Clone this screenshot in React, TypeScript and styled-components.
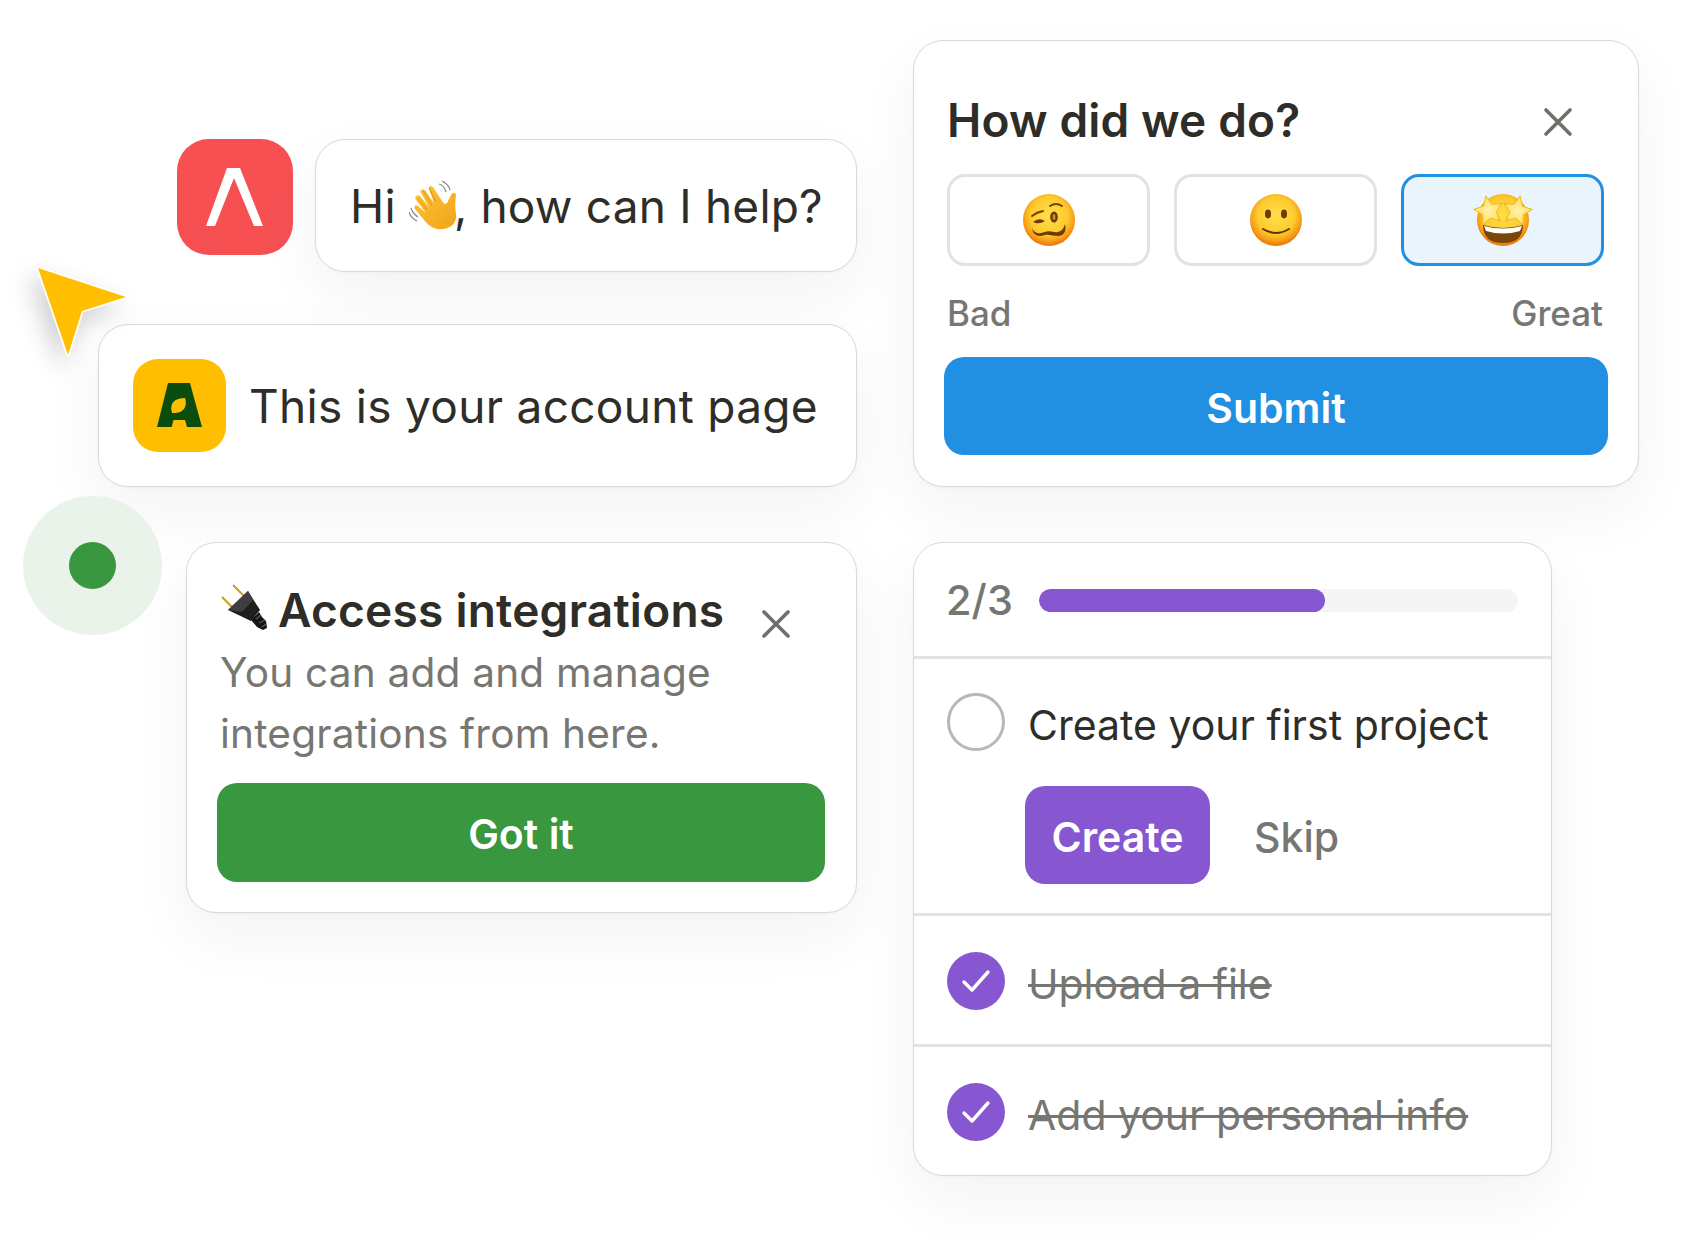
import React from "react";
import styled, { createGlobalStyle } from "styled-components";

const Global = createGlobalStyle`
  html, body { margin: 0; padding: 0; background: #fff; }
  body { font-family: Inter, "Liberation Sans", sans-serif; color: #2e2d28; }
`;

const Canvas = styled.div`
  width: 1684px;
  height: 1240px;
  overflow: hidden;
  display: grid;
  grid-template-columns: 857px 726px;
  column-gap: 56px;
  align-items: start;
  padding-top: 40px;
  box-sizing: border-box;
`;
const LeftColumn = styled.div`
  position: relative;
  display: flex;
  flex-direction: column;
  align-items: flex-end;
  padding-top: 99px;
`;
const RightColumn = styled.div`
  display: flex;
  flex-direction: column;
  align-items: flex-start;
  gap: 55px;
`;
const Card = styled.div<{ $width?: number }>`
  box-sizing: border-box;
  background: #fff;
  border: 1.5px solid #d9d9d9;
  border-radius: 30px;
  box-shadow: 0 24px 60px rgba(40, 40, 40, 0.055), 0 1px 3px rgba(40, 40, 40, 0.03);
  ${(p) => (p.$width ? `width: ${p.$width}px;` : "")}
`;
const HelloRow = styled.div`
  display: flex;
  align-items: flex-start;
  gap: 22px;
`;
const AppLogo = styled.svg`
  width: 116px;
  height: 116px;
  display: block;
  flex: none;
`;
const HelloCard = styled(Card)`
  width: 542px;
  height: 133px;
  padding-left: 34px;
  display: flex;
  align-items: center;
  white-space: pre;
  font-size: 46px;
  letter-spacing: 0.2px;
`;
const Wave = styled.svg`
  width: 56px;
  height: 52px;
  margin: 0 -11px 0 0;
  flex: none;
`;
const AccountCard = styled(Card)`
  width: 759px;
  height: 163px;
  margin-top: 52px;
  padding-left: 34px;
  display: flex;
  align-items: center;
  gap: 23px;
  font-size: 46px;
  letter-spacing: 0.3px;
  white-space: nowrap;
`;
const BrandLogo = styled.svg`
  width: 93px;
  height: 93px;
  display: block;
  flex: none;
`;
const Pointer = styled.svg`
  position: absolute;
  left: 30px;
  top: 217px;
  width: 106px;
  height: 100px;
  overflow: visible;
  filter: drop-shadow(-6px 10px 12px rgba(0, 0, 0, 0.2));
`;
const Beacon = styled.div`
  position: absolute;
  left: 23px;
  top: 456px;
  width: 139px;
  height: 139px;
  border-radius: 50%;
  background: #e9f3ea;
  display: flex;
  align-items: center;
  justify-content: center;
`;
const BeaconDot = styled.div`
  width: 47px;
  height: 47px;
  border-radius: 50%;
  background: #38973f;
`;
const TourCard = styled(Card)`
  width: 671px;
  height: 371px;
  margin-top: 55px;
  padding: 38px 31px 0 30px;
`;
const TourTitle = styled.div`
  display: flex;
  align-items: center;
  padding-left: 3px;
  height: 58px;
  font-size: 46px;
  font-weight: 600;
  letter-spacing: 0.25px;
  white-space: nowrap;
`;
const Plug = styled.svg`
  width: 48px;
  height: 48px;
  margin: 0 10px 4px 0;
  flex: none;
`;
const TourClose = styled.svg`
  width: 32px;
  height: 32px;
  margin: 28px 0 0 36px;
  flex: none;
`;
const TourText = styled.div`
  padding-left: 3px;
  margin-top: 4px;
  font-size: 40.6px;
  line-height: 60.5px;
  color: #767672;
  letter-spacing: 0.2px;
  white-space: nowrap;
`;
const ActionButton = styled.div<{ $bg: string }>`
  box-sizing: border-box;
  display: flex;
  align-items: center;
  justify-content: center;
  padding-top: 3px;
  background: ${(p) => p.$bg};
  color: #fff;
  font-size: 41px;
  font-weight: 600;
  border-radius: 20px;
`;
const GotIt = styled(ActionButton)`
  height: 99px;
  margin-top: 19px;
`;
const RatingCard = styled(Card)`
  height: 447px;
  padding: 0 30px;
`;
const RatingHead = styled.div`
  display: flex;
  align-items: center;
  justify-content: space-between;
  height: 58px;
  margin-top: 50px;
  padding: 0 34px 0 3px;
  font-size: 46px;
  font-weight: 600;
  letter-spacing: 0.15px;
`;
const Close = styled.svg`
  width: 32px;
  height: 32px;
  flex: none;
  margin-top: 4px;
`;
const Faces = styled.div`
  display: grid;
  grid-template-columns: repeat(3, 203px);
  gap: 24px;
  margin: 25px 0 0 3px;
`;
const FaceBox = styled.div<{ $on?: boolean }>`
  box-sizing: border-box;
  height: 92px;
  border-radius: 18px;
  border: 3px solid ${(p) => (p.$on ? "#2190e2" : "#e2e2e2")};
  background: ${(p) => (p.$on ? "#e9f4fc" : "#fff")};
  display: flex;
  align-items: center;
  justify-content: center;
`;
const Face = styled.svg`
  width: 60px;
  height: 60px;
`;
const Scale = styled.div`
  display: flex;
  justify-content: space-between;
  margin: 26px 5px 0 3px;
  font-size: 35px;
  line-height: 42px;
  font-weight: 500;
  color: #767672;
`;
const Submit = styled(ActionButton)`
  height: 98px;
  margin-top: 23px;
`;
const ChecklistCard = styled(Card)`
  width: 639px;
  height: 634px;
`;
const ProgressRow = styled.div`
  display: flex;
  align-items: center;
  gap: 26px;
  height: 112px;
  padding: 1px 33px 0 32px;
  border-bottom: 3px solid #e3e3e3;
  font-size: 41.5px;
  font-weight: 500;
  color: #767672;
`;
const Track = styled.div`
  flex: 1;
  height: 23px;
  border-radius: 12px;
  background: #f5f5f5;
  overflow: hidden;
`;
const Fill = styled.div`
  height: 100%;
  border-radius: 12px;
  background: #8657d0;
`;
const Task = styled.div`
  padding: 0 32px 0 33px;
  border-bottom: 3px solid #e3e3e3;
  &:last-child {
    border-bottom: 0;
  }
`;
const TaskLine = styled.div`
  display: flex;
  align-items: center;
  gap: 23px;
  height: 58px;
`;
const TaskLabel = styled.span<{ $done?: boolean }>`
  padding-top: 6px;
  font-size: 41px;
  white-space: nowrap;
  color: ${(p) => (p.$done ? "#767672" : "#2e2d28")};
  text-decoration: ${(p) => (p.$done ? "line-through" : "none")};
  text-decoration-thickness: 3px;
`;
const DoneTask = styled(Task)`
  padding-top: 36px;
  padding-bottom: 34px;
`;
const OpenTask = styled(Task)`
  padding-top: 34px;
  padding-bottom: 29px;
`;
const Radio = styled.div`
  box-sizing: border-box;
  width: 58px;
  height: 58px;
  border-radius: 50%;
  border: 3px solid #b8b8b6;
  flex: none;
`;
const Tick = styled.svg`
  width: 58px;
  height: 58px;
  flex: none;
`;
const TaskActions = styled.div`
  display: flex;
  align-items: center;
  gap: 44px;
  margin: 35px 0 0 78px;
`;
const Create = styled(ActionButton)`
  width: 185px;
  height: 98px;
`;
const Skip = styled.div`
  padding-top: 4px;
  font-size: 41px;
  font-weight: 500;
  color: #767672;
`;

const FaceDefs = ({ id }: { id: string }) => (
  <defs>
    <radialGradient id={id} cx="50%" cy="42%" r="55%">
      <stop offset="0%" stopColor="#ffdf4a" />
      <stop offset="65%" stopColor="#fdcb2e" />
      <stop offset="90%" stopColor="#f79a14" />
      <stop offset="100%" stopColor="#e9810e" />
    </radialGradient>
    <radialGradient id={`${id}s`} cx="50%" cy="50%" r="55%">
      <stop offset="0%" stopColor="#fff3ad" />
      <stop offset="70%" stopColor="#ffe46e" />
      <stop offset="100%" stopColor="#f6b81e" />
    </radialGradient>
  </defs>
);

const X = () => (
  <path d="M4 4 L28 28 M28 4 L4 28" stroke="#6f6f6b" strokeWidth="3.6" strokeLinecap="round" fill="none" />
);

const Check = () => (
  <Tick viewBox="0 0 58 58">
    <circle cx="29" cy="29" r="29" fill="#8657d0" />
    <path d="M17 30 L25 38 L41 20" fill="none" stroke="#fff" strokeWidth="3.4" strokeLinecap="round" strokeLinejoin="round" />
  </Tick>
);

const star = (cx: number, cy: number, r: number, rot: number) => {
  const pts: string[] = [];
  for (let i = 0; i < 10; i++) {
    const a = (rot + i * 36 - 90) * (Math.PI / 180);
    const rad = i % 2 === 0 ? r : r * 0.46;
    pts.push(`${(cx + rad * Math.cos(a)).toFixed(1)},${(cy + rad * Math.sin(a)).toFixed(1)}`);
  }
  return pts.join(" ");
};

export default function App() {
  return (
    <Canvas>
      <Global />
      <LeftColumn>
        <HelloRow>
          <AppLogo viewBox="0 0 116 116">
            <rect width="116" height="116" rx="32" fill="#f65053" />
            <polygon points="50,29 63,29 86,87 77,87 57,39 38,87 29,87" fill="#fff" />
          </AppLogo>
          <HelloCard>
            Hi{" "}
            <Wave viewBox="0 0 56 52">
              <defs>
                <linearGradient id="hand" x1="0" y1="0" x2="1" y2="1">
                  <stop offset="0%" stopColor="#fcc63c" />
                  <stop offset="100%" stopColor="#f3a217" />
                </linearGradient>
              </defs>
              <path
                fill="url(#hand)"
                d="M34 49 C25 50 20 46 15 40 L6 29 C4 27 7 24 9 26 L17 33 L7 20 C5 17 8 14 11 16 L20 27 L12 13 C10 10 14 8 16 10 L25 23 L20 9 C19 6 22 5 24 7 L33 21 C35 24 37 25 38 23 L42 15 C43 12 47 12 47 15 C46 22 46 28 47 34 C48 42 43 48 34 49 Z"
              />
              <path d="M9 18 L18 30 M14 11 L23 25 M20 8 L27 22" stroke="#d98f12" strokeWidth="0.9" fill="none" />
              <path d="M30 4 C33 5 36 8 37 12 M33 1 C37 3 40 6 41 10" stroke="#8a8a88" strokeWidth="1.2" fill="none" />
              <path d="M2 28 C3 32 6 35 9 37 M0 32 C1 36 4 39 8 41" stroke="#8a8a88" strokeWidth="1.2" fill="none" />
            </Wave>
            , how can I help?
          </HelloCard>
        </HelloRow>
        <Pointer viewBox="0 0 106 100">
          <polygon
            points="8,11 96,40 52,54 38,98"
            fill="#ffbf00"
            stroke="#fff"
            strokeWidth="3.4"
            strokeLinejoin="round"
            paintOrder="stroke"
          />
        </Pointer>
        <AccountCard>
          <BrandLogo viewBox="0 0 93 93">
            <rect width="93" height="93" rx="25" fill="#ffbf00" />
            <path
              fillRule="evenodd"
              fill="#0a4d0e"
              d="M35 24 L57 24 L69 68 L54 68 L52 61 L40.5 61 L38.7 68 L24 68 Z M39 54 C36 44 42 39 52 39 C55 48 50 55 39 54 Z"
            />
          </BrandLogo>
          This is your account page
        </AccountCard>
        <Beacon>
          <BeaconDot />
        </Beacon>
        <TourCard>
          <TourTitle>
            <Plug viewBox="0 0 48 48">
              <path d="M13 1 L26 14 M2 13 L14 25" stroke="#c9a227" strokeWidth="2.2" fill="none" />
              <path d="M28 7 L40 26 L31 37 L8 26 Z" fill="#1f1f1f" />
              <path d="M28 7 L33 16 L22 28 L8 26 Z" fill="#3f3f3f" />
              <path d="M31 36 L39 28 L42 33 L46 37 L47 44 L43 46 L37 43 Z" fill="#161616" />
              <path d="M36 35 L41 31 M39 39 L45 36 M42 43 L46 40" stroke="#5a5a5a" strokeWidth="1.1" />
            </Plug>
            Access integrations
            <TourClose viewBox="0 0 32 32">
              <X />
            </TourClose>
          </TourTitle>
          <TourText>
            You can add and manage
            <br />
            integrations from here.
          </TourText>
          <GotIt $bg="#38973f">Got it</GotIt>
        </TourCard>
      </LeftColumn>
      <RightColumn>
        <RatingCard $width={726}>
          <RatingHead>
            How did we do?
            <Close viewBox="0 0 32 32">
              <X />
            </Close>
          </RatingHead>
          <Faces>
            <FaceBox>
              <Face viewBox="0 0 60 60">
                <FaceDefs id="f1" />
                <circle cx="30" cy="30" r="26" fill="url(#f1)" />
                <path d="M13 26 Q18 22 24 21" stroke="#7a3e06" strokeWidth="2" fill="none" strokeLinecap="round" />
                <path d="M14 32 Q20 27 26 31 Q20 35 14 32 Z" fill="#6b3a08" />
                <path d="M31 16 Q37 12 43 16" stroke="#7a3e06" strokeWidth="2" fill="none" strokeLinecap="round" />
                <ellipse cx="35" cy="27" rx="3.8" ry="5.6" fill="#6b3a08" />
                <ellipse cx="35" cy="27" rx="1.5" ry="3" fill="#c98a1e" />
                <path d="M13 38 C15 44 21 44 26 42 C31 40 35 43 39 42 C43 41 45 38 46 34 C48 42 44 46 39 46 C34 46 30 44 26 45 C20 47 14 46 13 38 Z" fill="#6b3a08" />
              </Face>
            </FaceBox>
            <FaceBox>
              <Face viewBox="0 0 60 60">
                <FaceDefs id="f2" />
                <circle cx="30" cy="30" r="26" fill="url(#f2)" />
                <ellipse cx="22" cy="24" rx="3" ry="4.4" fill="#6b3a08" />
                <ellipse cx="38" cy="24" rx="3" ry="4.4" fill="#6b3a08" />
                <path d="M17 39 Q30 47 43 39" stroke="#5d3306" strokeWidth="2" fill="none" strokeLinecap="round" />
              </Face>
            </FaceBox>
            <FaceBox $on>
              <Face viewBox="0 0 60 60">
                <FaceDefs id="f3" />
                <circle cx="30" cy="30" r="26" fill="url(#f3)" />
                <path d="M10 35 Q30 41 50 35 Q50 53 30 53 Q10 53 10 35 Z" fill="#7a4506" />
                <path d="M11 36 Q30 41 49 36 L47 41 Q30 46 13 41 Z" fill="#fff" />
                <polygon points={star(16, 21, 15.5, -12)} fill="url(#f3s)" stroke="#f4b820" strokeWidth="1" strokeLinejoin="round" />
                <polygon points={star(44, 21, 15.5, 12)} fill="url(#f3s)" stroke="#f4b820" strokeWidth="1" strokeLinejoin="round" />
              </Face>
            </FaceBox>
          </Faces>
          <Scale>
            <span>Bad</span>
            <span>Great</span>
          </Scale>
          <Submit $bg="#2190e2">Submit</Submit>
        </RatingCard>
        <ChecklistCard>
          <ProgressRow>
            2/3
            <Track>
              <Fill style={{ width: `${(2 / 3.35) * 100}%` }} />
            </Track>
          </ProgressRow>
          <OpenTask>
            <TaskLine>
              <Radio />
              <TaskLabel>Create your first project</TaskLabel>
            </TaskLine>
            <TaskActions>
              <Create $bg="#8657d0">Create</Create>
              <Skip>Skip</Skip>
            </TaskActions>
          </OpenTask>
          <DoneTask>
            <TaskLine>
              <Check />
              <TaskLabel $done>Upload a file</TaskLabel>
            </TaskLine>
          </DoneTask>
          <DoneTask>
            <TaskLine>
              <Check />
              <TaskLabel $done>Add your personal info</TaskLabel>
            </TaskLine>
          </DoneTask>
        </ChecklistCard>
      </RightColumn>
    </Canvas>
  );
}
